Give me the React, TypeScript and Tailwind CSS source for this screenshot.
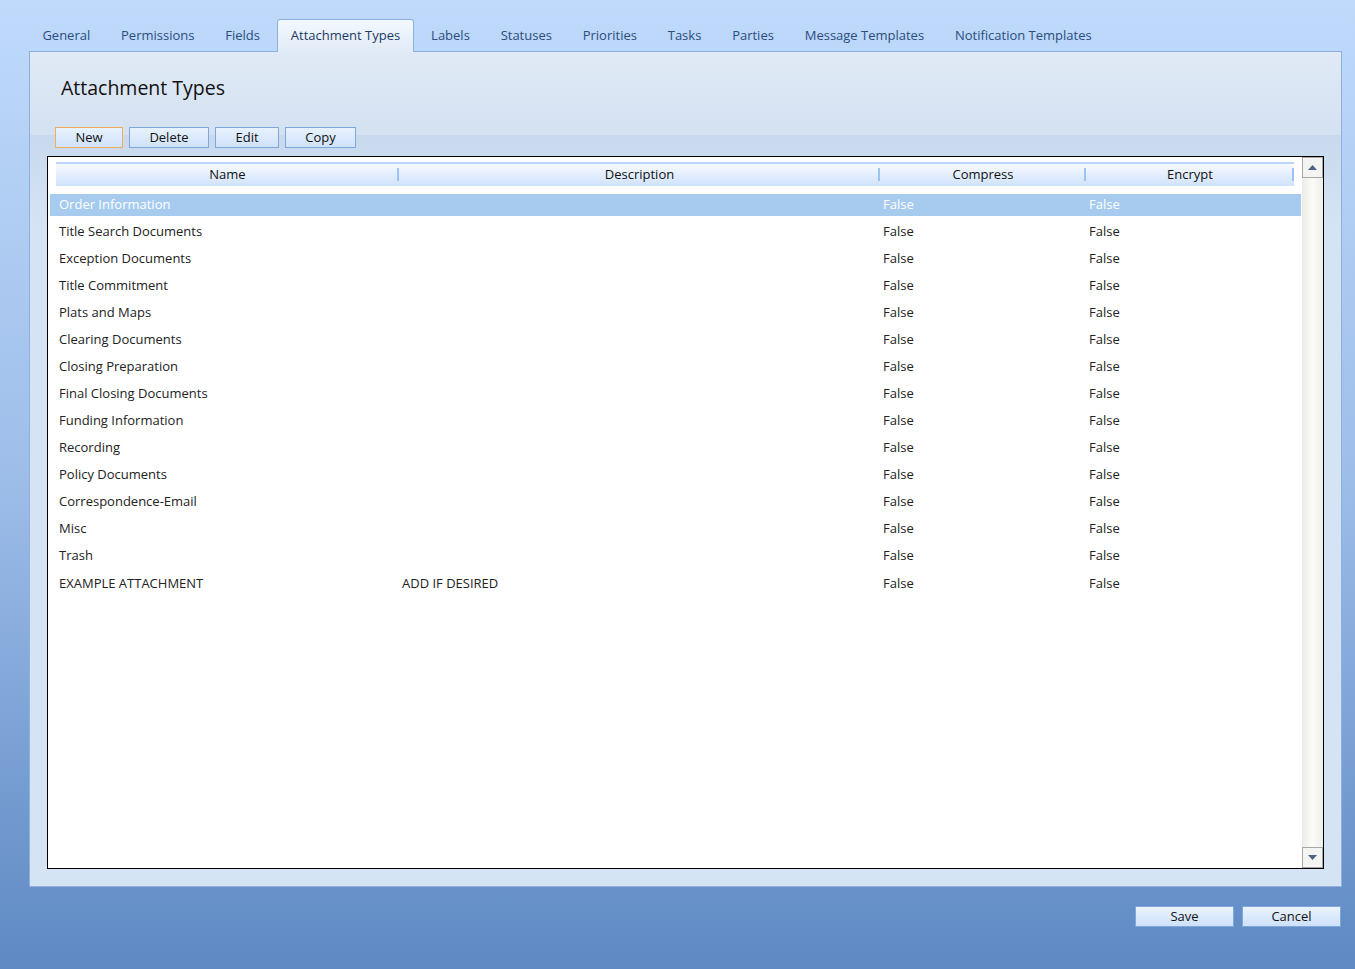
import React from "react";

const tabs = [
  "General",
  "Permissions",
  "Fields",
  "Attachment Types",
  "Labels",
  "Statuses",
  "Priorities",
  "Tasks",
  "Parties",
  "Message Templates",
  "Notification Templates",
];

const rows: [string, string][] = [
  ["Order Information", ""],
  ["Title Search Documents", ""],
  ["Exception Documents", ""],
  ["Title Commitment", ""],
  ["Plats and Maps", ""],
  ["Clearing Documents", ""],
  ["Closing Preparation", ""],
  ["Final Closing Documents", ""],
  ["Funding Information", ""],
  ["Recording", ""],
  ["Policy Documents", ""],
  ["Correspondence-Email", ""],
  ["Misc", ""],
  ["Trash", ""],
  ["EXAMPLE ATTACHMENT", "ADD IF DESIRED"],
];

function ToolButton({ label, width, active }: { label: string; width: string; active?: boolean }) {
  return (
    <button
      className={`${width} h-[21px] text-[13px] leading-none text-[#111] border bg-gradient-to-b from-[#e8f2fe] to-[#cfe2fa] ${
        active ? "border-[#f2ac5e]" : "border-[#7fa7dc]"
      }`}
    >
      {label}
    </button>
  );
}

function HeaderCell({ label, width }: { label: string; width: string }) {
  return (
    <div className={`${width} flex items-center justify-center relative`}>
      {label}
      <span className="absolute right-0 top-[4px] h-[13px] w-[2px] bg-[#9cc3f3]" />
    </div>
  );
}

export default function App() {
  return (
    <div
      className="w-[1355px] h-[969px] flex flex-col bg-gradient-to-b from-[#bfdafb] via-[#9dbde9] to-[#5e89c3] overflow-hidden"
      style={{ fontFamily: '"Open Sans", "Noto Sans", sans-serif' }}
    >
      {/* Tabs */}
      <div className="flex items-end pl-[27px] pt-[19px] h-[51px]">
        {tabs.map((t) => {
          const sel = t === "Attachment Types";
          return sel ? (
            <div
              key={t}
              className="h-[33px] -mb-px mx-[2px] z-10 px-[12.5px] flex items-center text-[13px] text-[#1c3a66] bg-gradient-to-b from-[#f3f8fe] to-[#e0ebf7] border border-b-0 border-[#8fb1e0] rounded-t-[3px]"
            >
              {t}
            </div>
          ) : (
            <div key={t} className="h-[32px] px-[15.4px] pt-[2px] flex items-center text-[13px] text-[#2b4c7e]">
              {t}
            </div>
          );
        })}
      </div>

      {/* Panel */}
      <div className="ml-[29px] w-[1313px] h-[836px] border border-[#8fb0de] bg-[#d5e4f4] flex flex-col">
        <div className="h-[83px] shrink-0 bg-gradient-to-b from-[#e0eaf6] to-[#d4e1f1] pl-[31px] pt-[21px]">
          <div className="text-[19.5px] text-[#111] leading-[30px]">Attachment Types</div>
        </div>
        <div className="flex-1 flex flex-col bg-gradient-to-b from-[#c8d9ee] to-[#d5e4f4] to-[12%]">
          <div className="pl-[25px] -mt-[8px] flex gap-[6px] h-[21px] items-start">
            <ToolButton label="New" width="w-[68px]" active />
            <ToolButton label="Delete" width="w-[80px]" />
            <ToolButton label="Edit" width="w-[64px]" />
            <ToolButton label="Copy" width="w-[71px]" />
          </div>

          {/* Grid */}
          <div className="ml-[17px] mt-[8px] w-[1277px] h-[713px] border border-black bg-white flex">
            <div className="flex-1 flex flex-col pl-[2px] pt-[5px]">
              <div className="ml-[6px] w-[1238px] h-[24px] flex border-t-2 border-[#bcd7fb] bg-gradient-to-b from-[#f7faff] to-[#cfe2fc] text-[13px] text-[#111]">
                <HeaderCell label="Name" width="w-[343px]" />
                <HeaderCell label="Description" width="w-[481px]" />
                <HeaderCell label="Compress" width="w-[206px]" />
                <HeaderCell label="Encrypt" width="w-[208px]" />
              </div>
              <div className="mt-[5px] flex flex-col">
                {rows.map(([name, desc], i) => {
                  const sel = i === 0;
                  return (
                    <div
                      key={name}
                      className={`w-[1251px] flex items-center ${i === rows.length - 1 ? "h-[28px] pt-[2px]" : "h-[27px]"}`}
                    >
                      <div
                        className={`w-full h-[22px] flex items-center text-[13px] ${
                          sel ? "bg-[#a7cbef] text-white" : "text-[#222]"
                        }`}
                      >
                        <div className="w-[348px] pl-[9px] shrink-0">{name}</div>
                        <div className="w-[481px] pl-[4px] shrink-0">{desc}</div>
                        <div className="w-[206px] pl-[4px] shrink-0">False</div>
                        <div className="w-[206px] pl-[4px] shrink-0">False</div>
                      </div>
                    </div>
                  );
                })}
              </div>
            </div>
            {/* Scrollbar */}
            <div className="w-[21px] flex flex-col bg-gradient-to-r from-[#ebebe6] via-[#fbfbf9] to-[#eeeeea]">
              <div className="h-[21px] border border-[#a8a8a8] bg-[#f4f4f2] flex items-center justify-center">
                <svg width="9" height="5" viewBox="0 0 9 5">
                  <path d="M0 5 L4.5 0 L9 5 Z" fill="#4d6185" />
                </svg>
              </div>
              <div className="flex-1" />
              <div className="h-[21px] border border-[#a8a8a8] bg-[#f4f4f2] flex items-center justify-center">
                <svg width="9" height="5" viewBox="0 0 9 5">
                  <path d="M0 0 L4.5 5 L9 0 Z" fill="#4d6185" />
                </svg>
              </div>
            </div>
          </div>
        </div>
      </div>

      {/* Footer buttons */}
      <div className="flex justify-end gap-[8px] pr-[14px] mt-[19px]">
        <button className="w-[99px] h-[21px] text-[13px] leading-none text-[#111] border border-[#7fa7dc] bg-gradient-to-b from-[#eaf3fe] to-[#cde1fa]">
          Save
        </button>
        <button className="w-[99px] h-[21px] text-[13px] leading-none text-[#111] border border-[#7fa7dc] bg-gradient-to-b from-[#eaf3fe] to-[#cde1fa]">
          Cancel
        </button>
      </div>
    </div>
  );
}
